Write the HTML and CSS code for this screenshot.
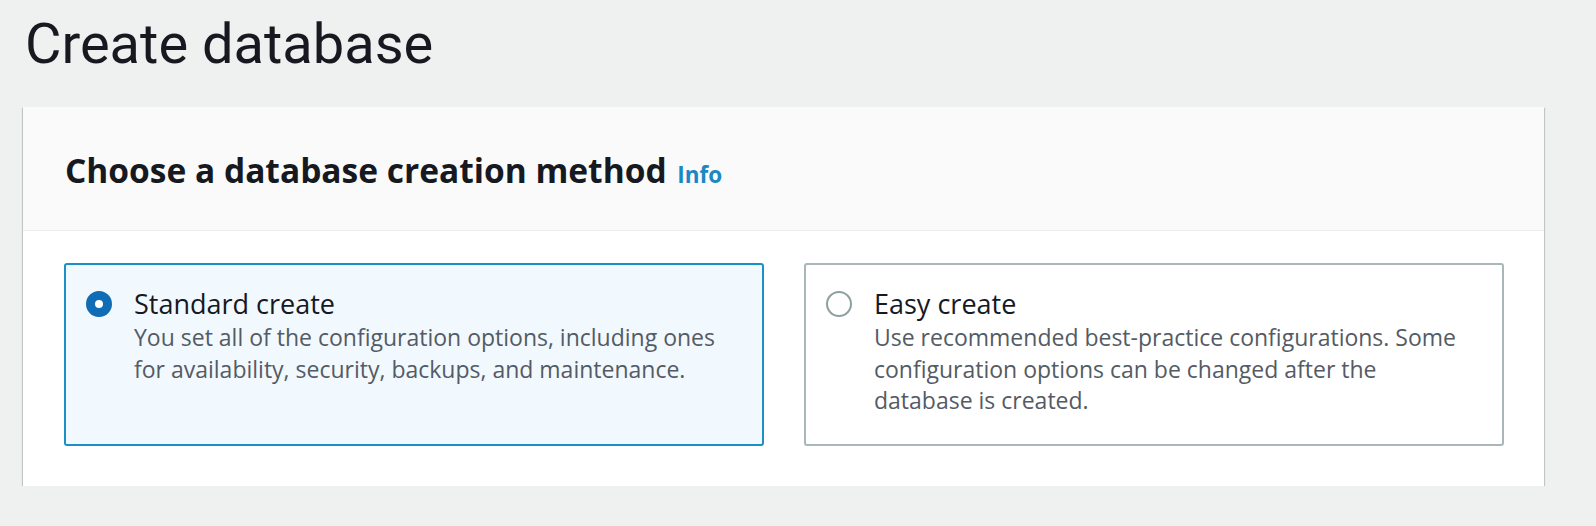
FILE: index.html
```html
<!DOCTYPE html>
<html lang="en">
<head>
<meta charset="utf-8">
<title>Create database</title>
<link rel="stylesheet" href="styles.css">
</head>
<body>
<main class="page">
  <h1 class="page-title">Create database</h1>
  <section class="panel">
    <header class="panel-header">
      <h2 class="panel-heading">Choose a database creation method <a class="info-link" href="#">Info</a></h2>
    </header>
    <div class="panel-body">
      <div class="tiles">
        <label class="tile tile-selected">
          <span class="radio radio-checked"></span>
          <span class="tile-text">
            <span class="tile-title">Standard create</span>
            <span class="tile-desc">You set all of the configuration options, including ones for availability, security, backups, and maintenance.</span>
          </span>
        </label>
        <label class="tile">
          <span class="radio"></span>
          <span class="tile-text">
            <span class="tile-title">Easy create</span>
            <span class="tile-desc">Use recommended best-practice configurations. Some configuration options can be changed after the database is created.</span>
          </span>
        </label>
      </div>
    </div>
  </section>
</main>
</body>
</html>
```
FILE: styles.css
```css
html, body {
  margin: 0;
  padding: 0;
}
body {
  background: #eff0f0;
  font-family: "Open Sans", Roboto, "Liberation Sans", sans-serif;
  color: #16191f;
}
.page {
  padding: 0 52px 0 23px;
}
.page-title {
  margin: 0 0 27px 2px;
  padding-top: 8px;
  font-family: Roboto, "Open Sans", sans-serif;
  font-size: 56px;
  line-height: 72px;
  font-weight: 400;
  color: #16191f;
}
.panel {
  background: #ffffff;
  box-shadow: 0 1px 1px 0 rgba(0, 28, 36, 0.3), 1px 1px 1px 0 rgba(0, 28, 36, 0.15), -1px 1px 1px 0 rgba(0, 28, 36, 0.15);
}
.panel-header {
  background: #fafafa;
  border-bottom: 1px solid #eaeded;
  padding: 43px 40px 35px 42px;
}
.panel-heading {
  margin: 0;
  font-size: 33.5px;
  line-height: 40px;
  font-weight: 700;
  color: #16191f;
}
.info-link {
  font-size: 22.5px;
  font-weight: 700;
  color: #1b87c3;
  text-decoration: none;
  margin-left: 2px;
}
.panel-body {
  padding: 32px 40px 40px 41px;
}
.tiles {
  display: grid;
  grid-template-columns: 1fr 1fr;
  gap: 40px;
}
.tile {
  display: flex;
  gap: 22px;
  border: 2px solid #aab7b8;
  border-radius: 3px;
  padding: 23px 30px 27px 20px;
  background: #ffffff;
}
.tile-selected {
  border-color: #1b8fc7;
  background: #f1f8fe;
}
.radio {
  flex: 0 0 auto;
  box-sizing: border-box;
  width: 26px;
  height: 26px;
  margin-top: 3px;
  border-radius: 50%;
  border: 2px solid #8f9ea0;
  background: #ffffff;
}
.radio-checked {
  border: 9px solid #0f6cb5;
  background: #ffffff;
}
.tile-text {
  display: flex;
  flex-direction: column;
  gap: 2px;
}
.tile-title {
  font-size: 27px;
  line-height: 32px;
  color: #16191f;
}
.tile-desc {
  font-size: 23px;
  line-height: 31.5px;
  color: #545b64;
}
```
